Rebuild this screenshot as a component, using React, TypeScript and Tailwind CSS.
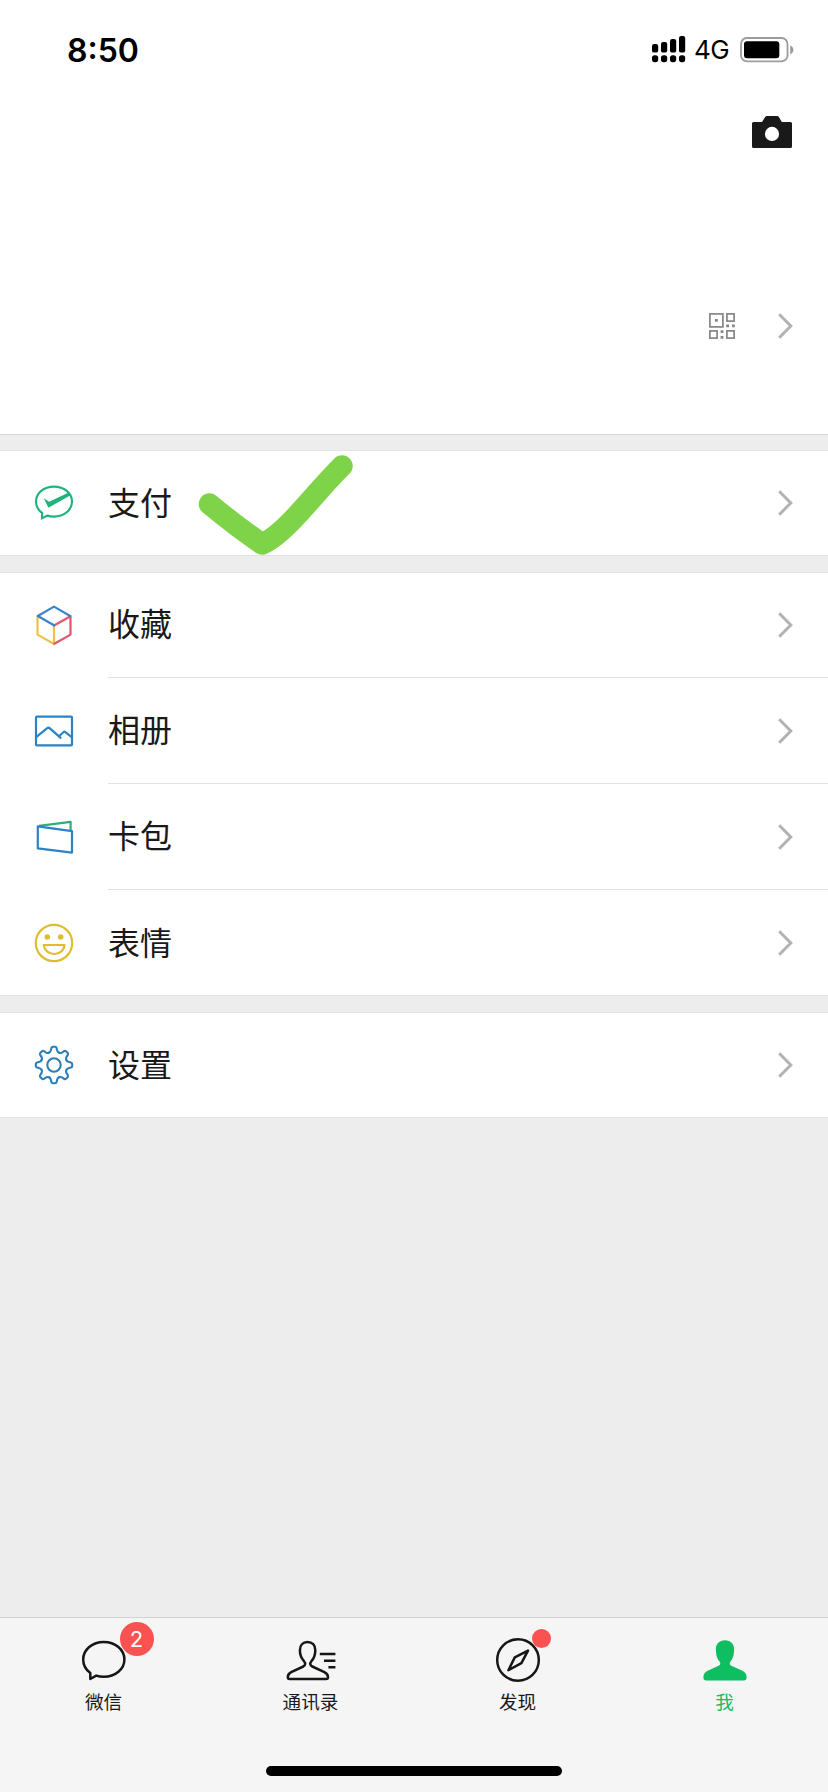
import type { ReactNode } from 'react';

interface RowProps {
    icon: ReactNode;
    label: string;
    divider?: boolean;
    children?: ReactNode;
}

interface TabProps {
    icon: ReactNode;
    label: string;
    active?: boolean;
    children?: ReactNode;
}

const Chevron = () => (
    <svg className="w-4 h-7 shrink-0" viewBox="0 0 16 28" fill="none" stroke="#b2b2b2" strokeWidth={3}>
        <path d="M2.2 2.3L13.8 14L2.2 25.7" />
    </svg>
);

const SignalIcon = () => (
    <svg className="w-[34px] h-7" viewBox="0 0 34 28" fill="#000">
        <rect x="0" y="8" width="6.2" height="8.6" rx="2.2" />
        <rect x="9" y="6" width="6.2" height="10.6" rx="2.2" />
        <rect x="18" y="3" width="6.2" height="13.6" rx="2.2" />
        <rect x="27" y="0" width="6.2" height="16.6" rx="2.2" />
        {[0, 9, 18, 27].map(x => (
            <rect key={x} x={x} y="19.2" width="6.2" height="7" rx="2.6" />
        ))}
    </svg>
);

const BatteryIcon = () => (
    <svg className="w-[54px] h-[26px]" viewBox="0 0 54 26">
        <rect x="1" y="1" width="46.5" height="23.4" rx="6" fill="none" stroke="#9c9c9c" strokeWidth={1.8} />
        <rect x="4" y="4.2" width="35.3" height="17" rx="3" fill="#000" />
        <path d="M50.2 8.6c2 .8 3.2 2.3 3.2 4.3s-1.2 3.5-3.2 4.3z" fill="#9c9c9c" />
    </svg>
);

const CameraIcon = () => (
    <svg className="w-10 h-8" viewBox="0 0 40 32">
        <path
            fill="#191919"
            fillRule="evenodd"
            d="M1.5 6H10L13 1.2Q13.8 0 15.2 0H25Q26.3 0 27 1.2L29.8 6H38.5Q40 6 40 7.5V30.5Q40 32 38.5 32H1.5Q0 32 0 30.5V7.5Q0 6 1.5 6ZM20 10.8a7.1 7.1 0 1 0 0 14.2a7.1 7.1 0 1 0 0-14.2Z"
        />
    </svg>
);

const QrIcon = () => (
    <svg className="w-[26px] h-[26px]" viewBox="0 0 26 26" fill="none" stroke="#858585" strokeWidth={1.7}>
        <rect x="0.9" y="0.9" width="13" height="13" />
        <rect x="17.9" y="0.9" width="7.2" height="7.2" />
        <rect x="0.9" y="17.9" width="7.2" height="7.2" />
        <rect x="17.9" y="17.9" width="7.2" height="7.2" />
        <path
            fill="#858585"
            stroke="none"
            d="M6 6h2.8v2.8H6zM17.2 11.4h2.8v2.8h-2.8zM23 11.4h2.8v2.8H23zM11.6 17.2h2.8V20h-2.8zM11.6 23h2.8v2.8h-2.8z"
        />
    </svg>
);

const PayIcon = () => (
    <svg className="w-10 h-10" viewBox="0 0 40 40" fill="none" stroke="#1fb47c" strokeWidth={2.2}>
        <path d="M8.1 30C4.2 27.2 2 23.2 2 18.6C2 10.2 10 3.6 20 3.6S38 10.2 38 18.6S30 33.6 20 33.6C17.7 33.6 15.4 33.3 13.4 32.6L8 35.2Z" />
        <path d="M9.8 15.3L15.2 18.8L35.2 9.2L37 12L14.4 24.8Z" fill="#1fb47c" stroke="none" />
    </svg>
);

const FavoriteIcon = () => (
    <svg className="w-10 h-10" viewBox="0 0 40 40" fill="none" strokeWidth={2.2} strokeLinejoin="round" strokeLinecap="round">
        <path d="M3.5 11.4V29.6L20 39V20.6" stroke="#edc04c" />
        <path d="M20.4 38.8L36.5 29.6V11.2L20 20.5" stroke="#e0566a" />
        <path d="M3.8 11L20 1.6L36.2 11M3.8 11L20 20.3" stroke="#3a82cc" />
    </svg>
);

const AlbumIcon = () => (
    <svg className="w-10 h-10" viewBox="0 0 40 40" fill="none" stroke="#2c82c4" strokeWidth={2.2} strokeLinejoin="round">
        <rect x="2" y="5.6" width="36" height="28.8" rx="1" />
        <path d="M2.2 26.2L13.2 17.2Q14.4 16.3 15.6 17.2L27.2 27.4M25.4 24.8L29.4 21.2Q30.4 20.3 31.4 21.2L38 26.4" />
    </svg>
);

const CardsIcon = () => (
    <svg className="w-10 h-10" viewBox="0 0 40 40" fill="none" strokeWidth={2.2} strokeLinejoin="round">
        <path d="M5 8.9L36.6 4.9V13.4" stroke="#2fae7c" />
        <path d="M3.8 9.4L38 14.2V35.6L3.8 31.4Z" stroke="#2c82c4" />
    </svg>
);

const StickerIcon = () => (
    <svg className="w-10 h-10" viewBox="0 0 40 40" fill="none" stroke="#e0bc30" strokeWidth={2.2}>
        <circle cx="20" cy="20" r="18.2" />
        <circle cx="13.3" cy="14" r="2.8" fill="#e0bc30" stroke="none" />
        <circle cx="26.7" cy="14" r="2.8" fill="#e0bc30" stroke="none" />
        <path d="M9.8 22H30.6C30.2 27.2 26 31 20.2 31S10.2 27.2 9.8 22Z" strokeLinejoin="round" />
    </svg>
);

const SettingsIcon = () => (
    <svg className="w-10 h-10" viewBox="-20 -20 40 40" fill="none" stroke="#2c7fb8" strokeWidth={2.1} strokeLinecap="round">
        <circle r="6.7" />
        {[0, 45, 90, 135, 180, 225, 270, 315].map(angle => (
            <path
                key={angle}
                transform={`rotate(${angle})`}
                d="M-5.1 -12.3Q-3.6 -12.9 -3.2 -14.4L-2.6 -16.9Q-2.3 -18.2 -1 -18.2H1Q2.3 -18.2 2.6 -16.9L3.2 -14.4Q3.6 -12.9 5.1 -12.3"
            />
        ))}
    </svg>
);

const ChatIcon = () => (
    <svg className="w-[52px] h-12" viewBox="0 0 52 48" fill="none" stroke="#161616" strokeWidth={2.5} strokeLinejoin="round">
        <path d="M12.3 36.9C7.9 33.7 5.2 28.9 5.2 23.4C5.2 13.7 14.3 5.9 25.8 5.9S46.4 13.7 46.4 23.4S37.3 40.8 25.8 40.8C23.1 40.8 20.5 40.4 18.2 39.6L12.3 43Z" />
    </svg>
);

const ContactsIcon = () => (
    <svg className="w-[52px] h-12" viewBox="0 0 52 48" fill="none" stroke="#161616" strokeWidth={2.5} strokeLinejoin="round">
        <path d="M22.5 6C17.8 6 14.9 9.2 14.9 14.2C14.9 19.2 16.4 22.3 19 25.2C20.8 27.3 20.4 29.4 18.3 30.5L6.2 36.2C3.6 37.5 2.8 38.9 2.8 41.2Q2.8 43 4.6 43H41.2Q43 43 43 41.2C43 38.9 42 37.5 39.4 36.2L27.3 30.5C25 29.4 24.6 27.3 26.4 25.2C29 22.3 30.3 19.2 30.3 14.2C30.3 9.2 27.2 6 22.5 6Z" />
        <path d="M34.8 17.9H50.4M39 24.7H50.4M43.4 31.3H50.4" />
    </svg>
);

const DiscoverIcon = () => (
    <svg className="w-[52px] h-12" viewBox="0 0 52 48" fill="none" stroke="#161616" strokeWidth={2.5} strokeLinejoin="round">
        <circle cx="26" cy="24" r="20.8" />
        <path d="M36 14.6L22.8 21.4L16.4 34.2L29.4 27.2Z" />
    </svg>
);

const MeIcon = () => (
    <svg className="w-[52px] h-12" viewBox="0 0 52 48" fill="#0ebe60">
        <path d="M26 4.3C20.4 4.3 16.9 7.8 16.9 13.2C16.9 19 18 22.4 20.6 25.6C21.9 27.4 21.4 29 19.6 29.8L8.6 34.8C5.6 36.4 4.4 38.2 4.4 41.4Q4.4 44.4 7.2 44.4H44.8Q47.6 44.4 47.6 41.4C47.6 38.2 46.4 36.4 43.4 34.8L32.4 29.8C30.6 29 30.1 27.4 31.4 25.6C34 22.4 35.1 19 35.1 13.2C35.1 7.8 31.6 4.3 26 4.3Z" />
    </svg>
);

const Row = ({ icon, label, divider, children }: RowProps) => (
    <div className="relative h-[106px] pl-[34px] flex items-center">
        {icon}
        <div className={`ml-[34px] h-full flex-1 flex items-center justify-between pr-[35px] ${divider ? 'border-b border-[#e2e2e2]' : ''}`}>
            <span className="pb-[5px] text-[32px] leading-none text-[#191919]">{label}</span>
            <Chevron />
        </div>
        {children}
    </div>
);

const Group = ({ children }: { children: ReactNode }) => (
    <section className="bg-white shadow-[inset_0_1px_0_#e2e2e2,inset_0_-1px_0_#e2e2e2]">{children}</section>
);

const Tab = ({ icon, label, active, children }: TabProps) => (
    <div className="flex flex-col items-center pt-[18px]">
        <div className="relative">
            {icon}
            {children}
        </div>
        <span className={`mt-2 text-[18.6px] leading-none ${active ? 'text-[#0ebe60]' : 'text-[#191919]'}`}>{label}</span>
    </div>
);

export default function App() {
    return (
        <div className="w-[828px] h-[1792px] overflow-hidden flex flex-col bg-[#ededed] font-['Noto_Sans_CJK_SC',sans-serif]">
            {/* Profile header */}
            <header className="h-[435px] shrink-0 bg-white border-b border-[#d6d6d6]">
                <div className="h-[100px] flex items-center justify-between pl-[67px] pr-[34px] font-[Inter,sans-serif] text-black">
                    <span className="pt-px text-[32px] font-semibold leading-none">8:50</span>
                    <div className="flex items-center">
                        <SignalIcon />
                        <span className="ml-2 w-[46px] text-[26px] leading-none tracking-tight">4G</span>
                        <BatteryIcon />
                    </div>
                </div>
                <div className="mt-4 flex justify-end pr-9">
                    <CameraIcon />
                </div>
                <div className="mt-[164px] flex items-center justify-end gap-[42px] pr-[35px]">
                    <QrIcon />
                    <Chevron />
                </div>
            </header>

            <main className="flex-1 pt-[15px] flex flex-col gap-4">
                <Group>
                    <Row icon={<PayIcon />} label="支付">
                        <svg className="absolute left-[196px] top-0 w-[160px] h-[108px]" viewBox="0 0 160 108" fill="none">
                            <path
                                d="M13.4 54Q40 76 66 94Q78 89 96 70.5C112 54 126 36 146 16"
                                stroke="#7ed348"
                                strokeWidth={21.5}
                                strokeLinecap="round"
                                strokeLinejoin="round"
                            />
                        </svg>
                    </Row>
                </Group>
                <Group>
                    <Row icon={<FavoriteIcon />} label="收藏" divider />
                    <Row icon={<AlbumIcon />} label="相册" divider />
                    <Row icon={<CardsIcon />} label="卡包" divider />
                    <Row icon={<StickerIcon />} label="表情" />
                </Group>
                <Group>
                    <Row icon={<SettingsIcon />} label="设置" />
                </Group>
            </main>

            {/* Tab bar */}
            <nav className="h-[175px] shrink-0 bg-[#f5f5f5] border-t border-[#d2d2d2] flex flex-col justify-between">
                <div className="grid grid-cols-4">
                    <Tab icon={<ChatIcon />} label="微信">
                        <span className="absolute -top-[14px] left-[42px] size-[34px] rounded-full bg-[#fa5151] flex items-center justify-center text-[22px] leading-none text-white font-[Inter,sans-serif]">
                            2
                        </span>
                    </Tab>
                    <Tab icon={<ContactsIcon />} label="通讯录" />
                    <Tab icon={<DiscoverIcon />} label="发现">
                        <span className="absolute -top-[7px] left-10 size-[19px] rounded-full bg-[#fa5151]" />
                    </Tab>
                    <Tab icon={<MeIcon />} label="我" active />
                </div>
                <div className="mb-4 mx-auto w-[296px] h-2.5 rounded-full bg-black" />
            </nav>
        </div>
    );
}
